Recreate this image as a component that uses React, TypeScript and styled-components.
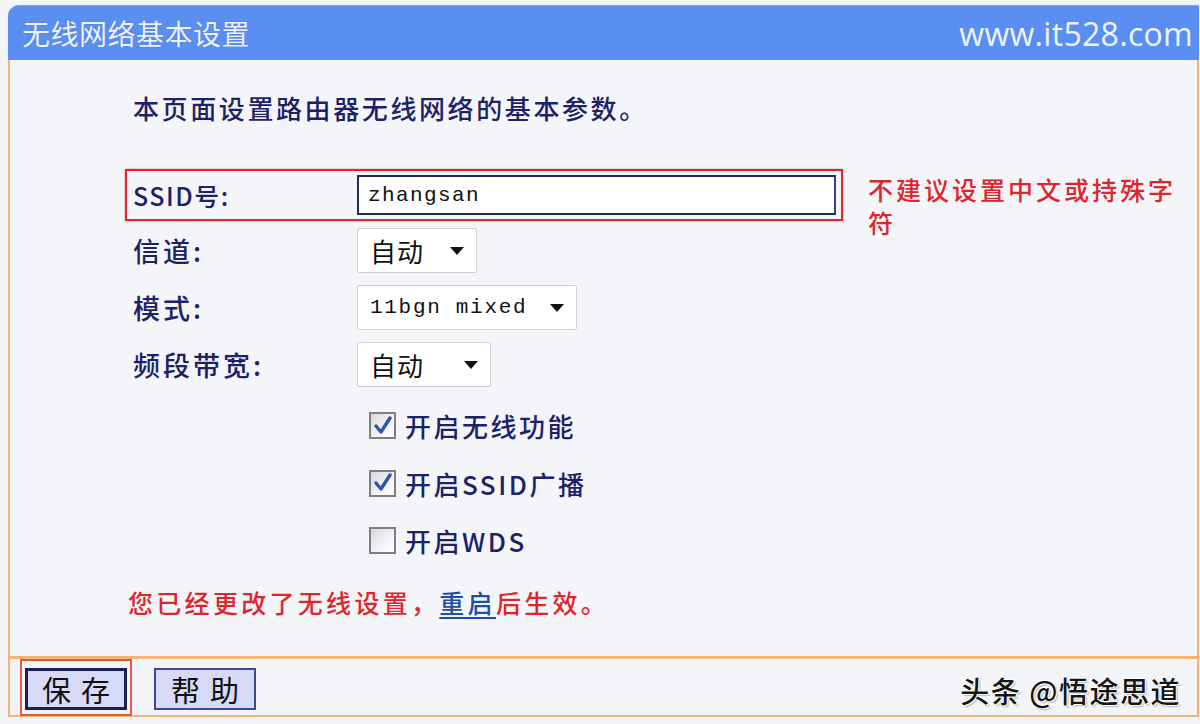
import React from "react";
import styled, { createGlobalStyle } from "styled-components";

const CJK = `"Noto Sans CJK SC", "Noto Sans", sans-serif`;
const MONO = `"Liberation Mono", "DejaVu Sans Mono", monospace`;
const NAVY = "#1d2268";
const RED = "#e0242c";
const ORANGE = "#f0b577";

const Global = createGlobalStyle`
  html, body { margin: 0; padding: 0; background: #f3f4f7; }
  body { width: 1200px; height: 724px; overflow: hidden; font-family: ${CJK}; }
  * { box-sizing: border-box; }
`;

const Page = styled.div`
  width: 1200px;
  height: 724px;
  padding: 5px 1px 7px 8px;
  background: #f3f4f7;
`;

const Frame = styled.div`
  height: 100%;
  display: flex;
  flex-direction: column;
`;

const Header = styled.div`
  height: 55px;
  flex: none;
  background: #5a8ff1;
  border-top-left-radius: 11px;
  border-top: 1px solid #7aa6f4;
  display: flex;
  align-items: center;
  justify-content: space-between;
  padding: 0 6px 0 14px;
`;

const Title = styled.div`
  font-family: ${CJK};
  font-size: 28px;
  color: #eef3ff;
  letter-spacing: 0.5px;
  text-shadow: 0 0 1px rgba(40, 70, 150, 0.6);
`;

const Site = styled.div`
  font-family: "Open Sans", "Noto Sans", sans-serif;
  font-size: 32px;
  color: #eef4ff;
  letter-spacing: 0.3px;
`;

const Body = styled.div`
  flex: 1;
  border-left: 2px solid ${ORANGE};
  border-right: 2px solid ${ORANGE};
  background: #f4f5f8;
  padding: 27px 0 0 115px;
`;

const Intro = styled.div`
  height: 40px;
  display: flex;
  align-items: center;
  padding-left: 8px;
  font-size: 26px;
  font-weight: 500;
  letter-spacing: 2.6px;
  color: ${NAVY};
  margin-bottom: 42px;
`;

const SsidLine = styled.div`
  height: 52px;
  display: flex;
  align-items: flex-start;
`;

const HighlightBox = styled.div`
  width: 718px;
  height: 52px;
  border: 2px solid ${RED};
  box-shadow: 0 0 2px rgba(224, 36, 44, 0.5);
  display: flex;
  align-items: center;
  padding-left: 6px;
`;

const Label = styled.div`
  width: 224px;
  flex: none;
  font-size: 27px;
  font-weight: 500;
  letter-spacing: 3px;
  color: ${NAVY};
`;

const SsidLabel = styled(Label)`
  font-size: 25px;
  letter-spacing: 1.5px;
`;

const TextInput = styled.div`
  width: 479px;
  height: 40px;
  border: 2px solid #23285e;
  border-right-color: #3a3f78;
  background: #fff;
  display: flex;
  align-items: center;
  padding-left: 9px;
  font-family: ${MONO};
  font-size: 21px;
  letter-spacing: 1.4px;
  color: #111;
`;

const Note = styled.div`
  width: 320px;
  margin-left: 25px;
  margin-top: 4px;
  font-size: 25px;
  font-weight: 500;
  line-height: 33px;
  letter-spacing: 3px;
  color: ${RED};
`;

const Row = styled.div`
  height: 57px;
  display: flex;
  align-items: center;
  padding-left: 8px;
`;

const FirstRow = styled(Row)`
  margin-top: 1px;
`;

const Select = styled.div<{ $w: number }>`
  width: ${(p) => p.$w}px;
  height: 45px;
  background: #fff;
  border: 1px solid #cfd0d4;
  border-radius: 2px;
  display: flex;
  align-items: center;
  justify-content: space-between;
  padding: 0 12px 0 12px;
  color: #111;
`;

const SelectText = styled.span<{ $mono?: boolean }>`
  font-family: ${(p) => (p.$mono ? MONO : CJK)};
  font-size: ${(p) => (p.$mono ? "21px" : "26px")};
  letter-spacing: ${(p) => (p.$mono ? "1.7px" : "1px")};
`;

const Arrow = () => (
  <svg width="14" height="8" viewBox="0 0 14 8">
    <polygon points="0,0 14,0 7,8" fill="#111" />
  </svg>
);

const CheckRow = styled.div`
  height: 57.5px;
  display: flex;
  align-items: center;
  padding-left: 244px;
`;

const CheckFirst = styled(CheckRow)`
  margin-top: 4px;
`;

const Box = styled.div`
  width: 27px;
  height: 27px;
  border: 2px solid #7e7e86;
  background: linear-gradient(135deg, #d8d8dc 0%, #f4f4f6 60%, #ffffff 100%);
  display: flex;
  align-items: center;
  justify-content: center;
  margin-right: 9px;
`;

const CheckLabel = styled.span`
  font-size: 26px;
  font-weight: 500;
  letter-spacing: 2.5px;
  color: ${NAVY};
`;

const Message = styled.div`
  height: 57px;
  margin-top: 4px;
  display: flex;
  align-items: center;
  padding-left: 3px;
  font-size: 25px;
  font-weight: 500;
  letter-spacing: 3.3px;
  color: ${RED};
`;

const Link = styled.span`
  color: #1c4fa6;
  text-decoration: underline;
  text-underline-offset: 4px;
`;

const Footer = styled.div`
  height: 61px;
  flex: none;
  border: 2px solid ${ORANGE};
  border-top-width: 3px;
  background: #f3f4f7;
  display: flex;
  align-items: center;
  padding-left: 10px;
  padding-right: 16px;
`;

const SaveHighlight = styled.div`
  width: 112px;
  height: 57px;
  border: 2px solid #e45a3a;
  display: flex;
  align-items: center;
  justify-content: center;
  padding-top: 4px;
`;

const Button = styled.div<{ $primary?: boolean }>`
  width: 102px;
  height: 42px;
  background: #d6daf7;
  border: ${(p) => (p.$primary ? "3px solid #1b2052" : "2px solid #3d4a8e")};
  display: flex;
  align-items: center;
  justify-content: center;
  font-size: 29px;
  letter-spacing: 10px;
  padding-left: 10px;
  color: #111;
`;

const HelpButton = styled(Button)`
  margin-left: 22px;
  margin-top: 4px;
`;

const Watermark = styled.div`
  margin-left: auto;
  margin-top: 6px;
  font-size: 29px;
  font-weight: 500;
  color: #151515;
  letter-spacing: 1.5px;
  text-shadow: 1px 1px 0 #fff, -1px 0 0 #fff, 0 -1px 0 #fff, 2px 2px 1px rgba(0,0,0,0.25);
`;

const Check = ({ on }: { on: boolean }) => (
  <Box>
    {on && (
      <svg width="20" height="20" viewBox="0 0 20 20">
        <path d="M3 10 L8 16 L17 2" fill="none" stroke="#2f56a8" strokeWidth="3.4" strokeLinecap="round" strokeLinejoin="round" />
      </svg>
    )}
  </Box>
);

export default function App() {
  return (
    <>
      <Global />
      <Page>
        <Frame>
          <Header>
            <Title>无线网络基本设置</Title>
            <Site>www.it528.com</Site>
          </Header>
          <Body>
            <Intro>本页面设置路由器无线网络的基本参数。</Intro>
            <SsidLine>
              <HighlightBox>
                <SsidLabel>SSID号:</SsidLabel>
                <TextInput>zhangsan</TextInput>
              </HighlightBox>
              <Note>不建议设置中文或持殊字符</Note>
            </SsidLine>
            <FirstRow>
              <Label>信道:</Label>
              <Select $w={120}>
                <SelectText>自动</SelectText>
                <Arrow />
              </Select>
            </FirstRow>
            <Row>
              <Label>模式:</Label>
              <Select $w={220}>
                <SelectText $mono>11bgn mixed</SelectText>
                <Arrow />
              </Select>
            </Row>
            <Row>
              <Label>频段带宽:</Label>
              <Select $w={134}>
                <SelectText>自动</SelectText>
                <Arrow />
              </Select>
            </Row>
            <CheckFirst>
              <Check on />
              <CheckLabel>开启无线功能</CheckLabel>
            </CheckFirst>
            <CheckRow>
              <Check on />
              <CheckLabel>开启SSID广播</CheckLabel>
            </CheckRow>
            <CheckRow>
              <Check on={false} />
              <CheckLabel>开启WDS</CheckLabel>
            </CheckRow>
            <Message>
              您已经更改了无线设置，<Link>重启</Link>后生效。
            </Message>
          </Body>
          <Footer>
            <SaveHighlight>
              <Button $primary>保存</Button>
            </SaveHighlight>
            <HelpButton>帮助</HelpButton>
            <Watermark>头条 @悟途思道</Watermark>
          </Footer>
        </Frame>
      </Page>
    </>
  );
}
